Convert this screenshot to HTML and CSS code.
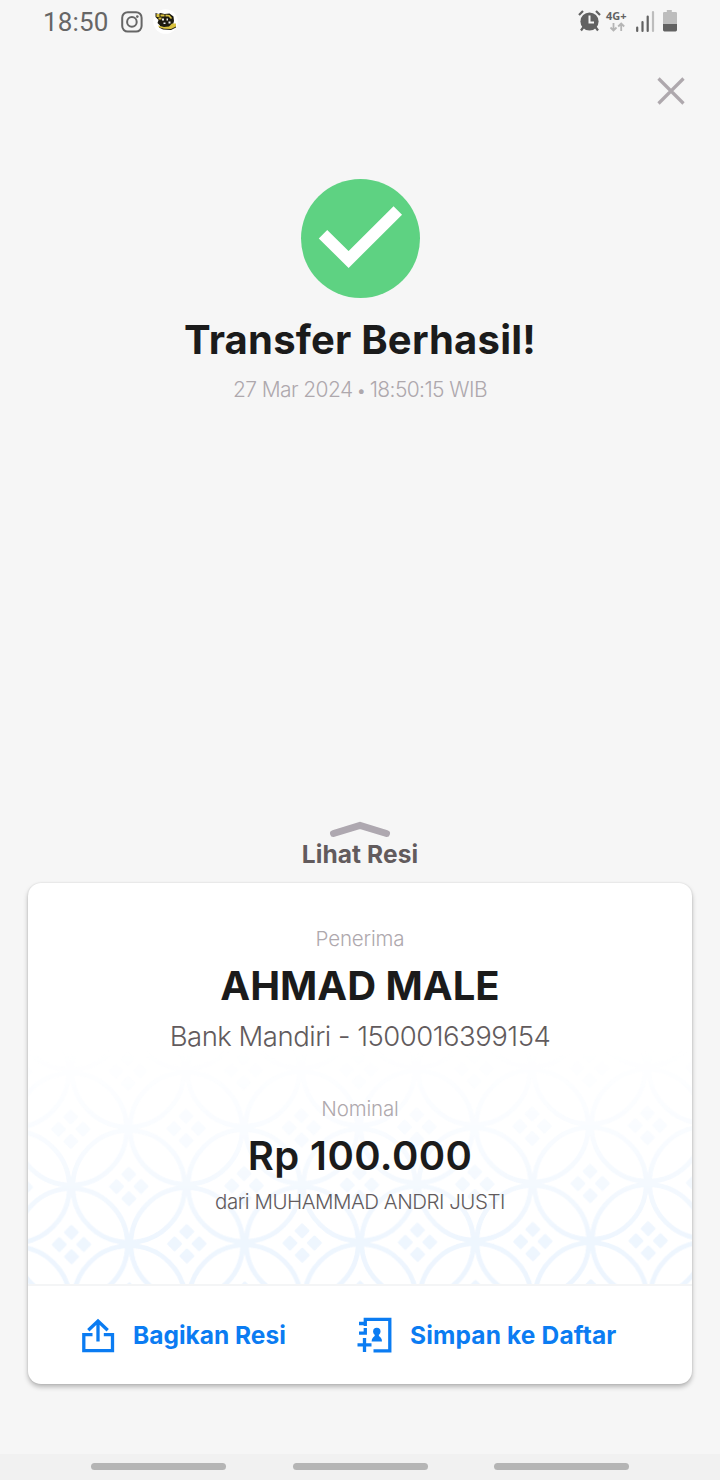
FILE: index.html
```html
<!DOCTYPE html>
<html lang="id">
<head>
<meta charset="utf-8">
<title>Transfer Berhasil</title>
<link rel="stylesheet" href="styles.css">
</head>
<body>
<div class="screen">
  <header class="status">
    <span class="time">18:50</span>
    <svg class="insta" width="22" height="22" viewBox="0 0 22 22" fill="none" stroke="#666" stroke-width="2"><rect x="1.2" y="1.2" width="19.4" height="19.4" rx="5.5"/><circle cx="10.9" cy="10.9" r="4.8"/><circle cx="16.3" cy="5.6" r="1.3" fill="#666" stroke="none"/></svg>
    <svg class="avatar" width="25" height="25" viewBox="0 0 25 25"><circle cx="12.5" cy="12.500" r="12.300" fill="#fff"/><path d="M2.500 4l3 1 2-1 4 1 5-.5 4 3 .500 4.500-1 3.500h3v3l-5 2.500-8-.5-4-2 1-2-2.500-2.500 1-3-3-3z" fill="#1d1b12"/><path d="M3.500 5h3v3h-3zM7.500 5.500h4v2h-4zM12.500 5.500l4 .500 2.500 3-1 1-2.500-2.500h-3zM5.500 8.500h3v2h-3zM5 16.500l6 1.500 5-.5 3-3h4v3l-5 2.500-7-.3-5-1.500z" fill="#d9c240"/><path d="M9 9.500h2v2H9zM13.500 9.500h1.500v2h-1.500zM10.500 13.500h2v1.500h-2zM15.500 12.500h2v2h-2z" fill="#eee"/></svg>
    <span class="spacer"></span>
    <svg width="102" height="26" viewBox="0 0 102 26">
      <circle cx="11.500" cy="12.500" r="9.100" fill="#626262"/><path d="M11.500 6.500v7h4.500" fill="none" stroke="#f6f6f6" stroke-width="2"/>
      <path d="M1 6l4-4M18 2l4 4M5.500 18l-2.500 3.500M17.500 18l2.500 3.500" stroke="#626262" stroke-width="2.200"/>
      <text class="net" x="28" y="11">4G+</text>
      <path d="M35.500 14v7M32.500 18.500l3 3 3-3M43.200 22v-7M40.200 17.500l3-3 3 3" fill="none" stroke="#b5b5b5" stroke-width="1.800"/>
      <path d="M59.200 18.500v3.500M64.500 13V22M69.700 7.500V22" stroke="#626262" stroke-width="2.200" stroke-linecap="round"/><path d="M75 3v19" stroke="#bdbdbd" stroke-width="2.200" stroke-linecap="round"/>
      <path d="M88.800 1h5v2h4q1.200 0 1.200 1.200V15H85V4.200q0-1.200 1.200-1.200h2.600z" fill="#bdbdbd"/><path d="M85 15h14v6.100q0 1.400-1.400 1.400H86.400Q85 22.500 85 21.100z" fill="#626262"/>
    </svg>
  </header>
  <div class="topbar"><svg width="30" height="30" viewBox="0 0 30 30"><path d="M2.500 2.500l25 25M27.500 2.500l-25 25" stroke="#aea8ad" stroke-width="3.200"/></svg></div>

  <main class="result">
    <svg width="120" height="120" viewBox="0 0 120 120"><circle cx="60.500" cy="59.500" r="59.500" fill="#5ed282"/><path d="M23 55.200L48.600 80.500 97.800 31.400" fill="none" stroke="#fff" stroke-width="12"/></svg>
    <h1 class="title">Transfer Berhasil!</h1>
    <p class="date">27 Mar 2024 <b>•</b> 18:50:15 WIB</p>
  </main>

  <div class="pull">
    <svg width="62" height="18" viewBox="0 0 62 18"><path d="M4.500 12.500L31 4.500l26.500 8" fill="none" stroke="#aea8b0" stroke-width="7" stroke-linecap="round"/></svg>
    <span class="pull-label">Lihat Resi</span>
  </div>

  <section class="card">
    <div class="receipt">
      <svg class="pattern" width="664" height="235" viewBox="0 1050 664 235">
        <defs>
          <linearGradient id="fade" x1="0" y1="1050" x2="0" y2="1285" gradientUnits="userSpaceOnUse"><stop offset="0" stop-color="#fff" stop-opacity="0"/><stop offset=".35" stop-color="#fff" stop-opacity=".33"/><stop offset=".8" stop-color="#fff" stop-opacity=".92"/><stop offset="1" stop-color="#fff"/></linearGradient>
          <mask id="mask" maskUnits="userSpaceOnUse" x="0" y="1050" width="664" height="235"><rect y="1050" width="664" height="235" fill="url(#fade)"/></mask>
          <g id="motif" fill="#edf5fe"><circle r="56" fill="none" stroke="#edf5fe" stroke-width="4.800"/><g transform="rotate(45)"><rect x="-14.300" y="-14.300" width="11.300" height="11.300" rx="1.500"/><rect x="3" y="-14.300" width="11.300" height="11.300" rx="1.500"/><rect x="-14.300" y="3" width="11.300" height="11.300" rx="1.500"/><rect x="3" y="3" width="11.300" height="11.300" rx="1.500"/></g><circle cx="57.675" r="4.500"/><circle cx="-57.675" r="4.500"/><circle cy="57.675" r="4.500"/><circle cy="-57.675" r="4.500"/></g>
          <pattern id="kawung" width="115.350" height="115.350" patternUnits="userSpaceOnUse" patternTransform="translate(43.500 1245.500) rotate(-.37)"><use href="#motif"/><use href="#motif" x="115.350"/><use href="#motif" y="115.350"/><use href="#motif" x="115.350" y="115.350"/><use href="#motif" x="57.675" y="57.675"/></pattern>
        </defs>
        <rect y="1050" width="664" height="235" fill="url(#kawung)" mask="url(#mask)"/>
      </svg>
      <p class="label first">Penerima</p>
      <h2 class="name">AHMAD MALE</h2>
      <p class="bank">Bank Mandiri - 1500016399154</p>
      <p class="label second">Nominal</p>
      <p class="amount">Rp 100.000</p>
      <p class="from">dari MUHAMMAD ANDRI JUSTI</p>
    </div>
    <div class="actions">
      <a class="action share">
        <svg width="34" height="36" viewBox="0 0 34 36" fill="none" stroke="#0b7cf2" stroke-width="3.300"><path d="M11.500 17.700H2.800v16h28.700v-16h-8.700M17 24.500V4.500M7.300 13.300L17 4l9.700 9.300"/></svg>
        <span>Bagikan Resi</span>
      </a>
      <a class="action save">
        <svg width="36" height="38" viewBox="0 0 36 38"><path d="M8.300 12v5.200H2M8.300 10V4.200M2 7.500h6.300V3.300h24.500v31.500H16.500" fill="none" stroke="#0b7cf2" stroke-width="3.300"/><path d="M7.500 22v14M.5 28.800h14" stroke="#0b7cf2" stroke-width="3.300"/><circle cx="19.800" cy="15.500" r="3.700" fill="#0b7cf2"/><path d="M18 18h3.600q-.2 2.200 2 3.400 1.500 1.300 1.400 4H14.600q0-2.700 1.400-4Q18.200 20.200 18 18z" fill="#0b7cf2"/></svg>
        <span class="save-text">Simpan ke Daftar</span>
      </a>
    </div>
  </section>
  <nav class="nav"><i></i><i></i><i></i></nav>
</div>
</body>
</html>
```
FILE: styles.css
```css
* { box-sizing: border-box; margin: 0; padding: 0; }
body { background: #f6f6f6; font-family: Inter, "Liberation Sans", sans-serif; }
svg { display: block; flex: none; }
.screen { width: 720px; height: 1480px; display: flex; flex-direction: column; overflow: hidden; white-space: nowrap; }
.status { height: 43px; padding: 0 40px 0 43px; display: flex; align-items: center; }
.time { width: 78px; font: 400 26px/44px Roboto, sans-serif; letter-spacing: .15px; color: #666; }
.avatar { margin-left: 10px; }
.spacer { flex: 1; }
.net { font: 700 11px "Open Sans", sans-serif; fill: #626262; }
.topbar { height: 136px; padding: 33px 34px 0; display: flex; justify-content: flex-end; }
.result { height: 640px; display: flex; flex-direction: column; align-items: center; }
.title { margin-top: 15px; font-size: 40px; line-height: 51px; font-weight: 700; letter-spacing: .2px; color: #1b1b1b; }
.date { margin-top: 10px; font-size: 21px; line-height: 30px; font-weight: 350; letter-spacing: -.6px; color: #aea8ad; }
.date b { font-size: 15px; vertical-align: 1px; }
.pull { height: 64px; padding-top: 2px; display: flex; flex-direction: column; align-items: center; }
.pull-label { font-size: 24.500px; line-height: 30px; font-weight: 700; letter-spacing: .1px; color: #625b5d; }
.card { height: 501px; margin: 0 28px; border-radius: 13px; overflow: hidden; background: #fff; box-shadow: 0 3px 5px rgba(0,0,0,.26), 0 0 2px rgba(0,0,0,.12); }
.receipt { height: 403px; position: relative; border-bottom: 2px solid #f4f5f6; display: flex; flex-direction: column; align-items: center; }
.receipt p, .receipt h2 { position: relative; }
.pattern { position: absolute; left: 0; bottom: 0; }
.label { font-size: 20.500px; line-height: 30px; font-weight: 350; letter-spacing: -.15px; color: #aea8ad; }
.first { margin-top: 41px; }
.name { margin-top: 7px; font-size: 40px; line-height: 50px; font-weight: 700; color: #1b1b1b; }
.bank { margin-top: 6px; font-size: 27.500px; line-height: 38px; font-weight: 350; letter-spacing: -.5px; color: #625b5d; }
.second { margin-top: 39px; }
.amount { margin-top: 7px; font-size: 40px; line-height: 50px; font-weight: 600; letter-spacing: .4px; color: #1b1b1b; }
.from { margin-top: 6px; font-size: 20.500px; line-height: 30px; font-weight: 350; letter-spacing: -.48px; color: #625b5d; }
.actions { height: 98px; display: flex; align-items: center; padding-left: 53px; }
.action { display: flex; align-items: center; font-size: 24.500px; font-weight: 700; color: #0b7cf2; }
.share { width: 276px; gap: 18px; }
.save { gap: 17px; }
.save-text { letter-spacing: .15px; }
.nav { height: 26px; margin-top: auto; padding: 9px 91px 0; display: flex; justify-content: space-between; background: #f1f1f1; }
.nav i { width: 135px; height: 7px; border-radius: 4px; background: #b5b5b5; }
```
